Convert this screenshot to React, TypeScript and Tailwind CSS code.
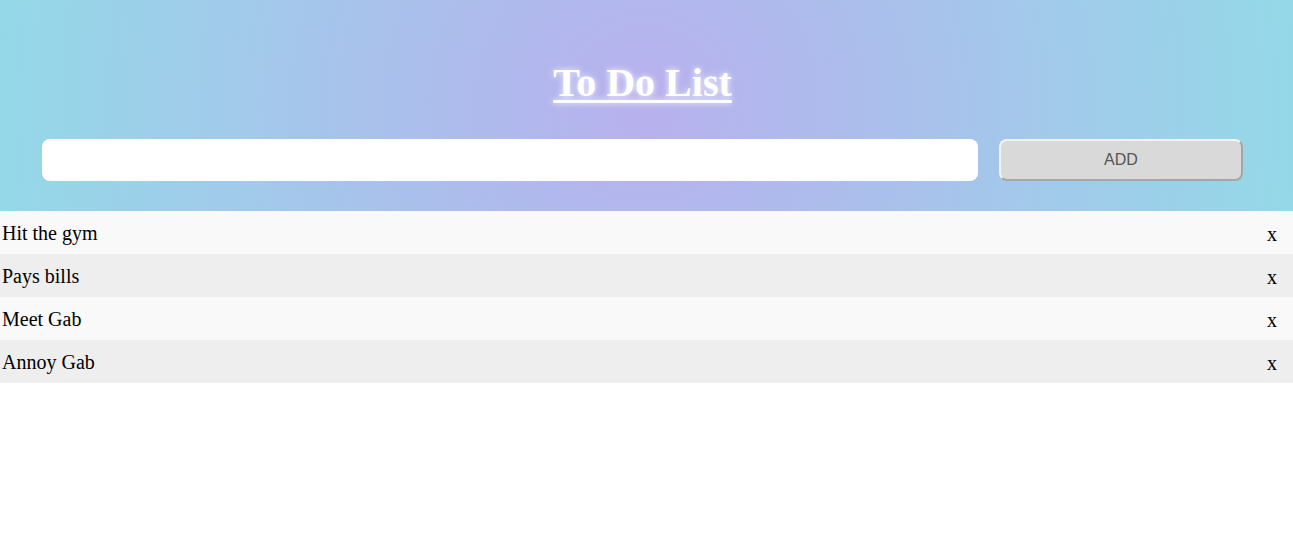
import { useState } from "react";

const initial = ["Hit the gym", "Pays bills", "Meet Gab", "Annoy Gab"];

export default function App() {
  const [items, setItems] = useState<string[]>(initial);
  const [text, setText] = useState("");

  const add = () => {
    if (!text.trim()) return;
    setItems([...items, text.trim()]);
    setText("");
  };

  return (
    <div className="min-h-[553px] bg-white font-['Liberation_Serif',serif]">
      <div className="h-[211px] bg-[radial-gradient(circle_at_center,#b8b0ee_0%,#94d9e8_100%)] pt-[59px] pl-[42px] pr-[50px]">
        <h1 className="text-center text-[40px] leading-[48px] font-bold text-white underline decoration-[3px] underline-offset-[4px] [text-shadow:0_0_6px_rgba(255,255,255,0.9)]">
          To Do List
        </h1>
        <div className="mt-[32px] flex gap-[21px]">
          <input
            value={text}
            onChange={(e) => setText(e.target.value)}
            className="h-[42px] flex-1 rounded-[8px] bg-white px-3 outline-none"
          />
          <button
            onClick={add}
            className="h-[42px] w-[244px] rounded-[8px] border-2 border-t-[#f2f2f2] border-l-[#f2f2f2] border-r-[#a6a6a6] border-b-[#a6a6a6] bg-[#d9d9d9] font-['Liberation_Sans',sans-serif] text-[16px] text-[#555]"
          >
            ADD
          </button>
        </div>
      </div>
      <ul>
        {items.map((item, i) => (
          <li
            key={item + i}
            className={`flex h-[43px] items-center justify-between pl-[2px] pr-[16px] text-[20px] text-black ${
              i % 2 === 0 ? "bg-[#f9f9f9]" : "bg-[#eeeeee]"
            }`}
          >
            <span>{item}</span>
            <span
              className="cursor-pointer pt-[3px]"
              onClick={() => setItems(items.filter((_, j) => j !== i))}
            >
              x
            </span>
          </li>
        ))}
      </ul>
    </div>
  );
}
